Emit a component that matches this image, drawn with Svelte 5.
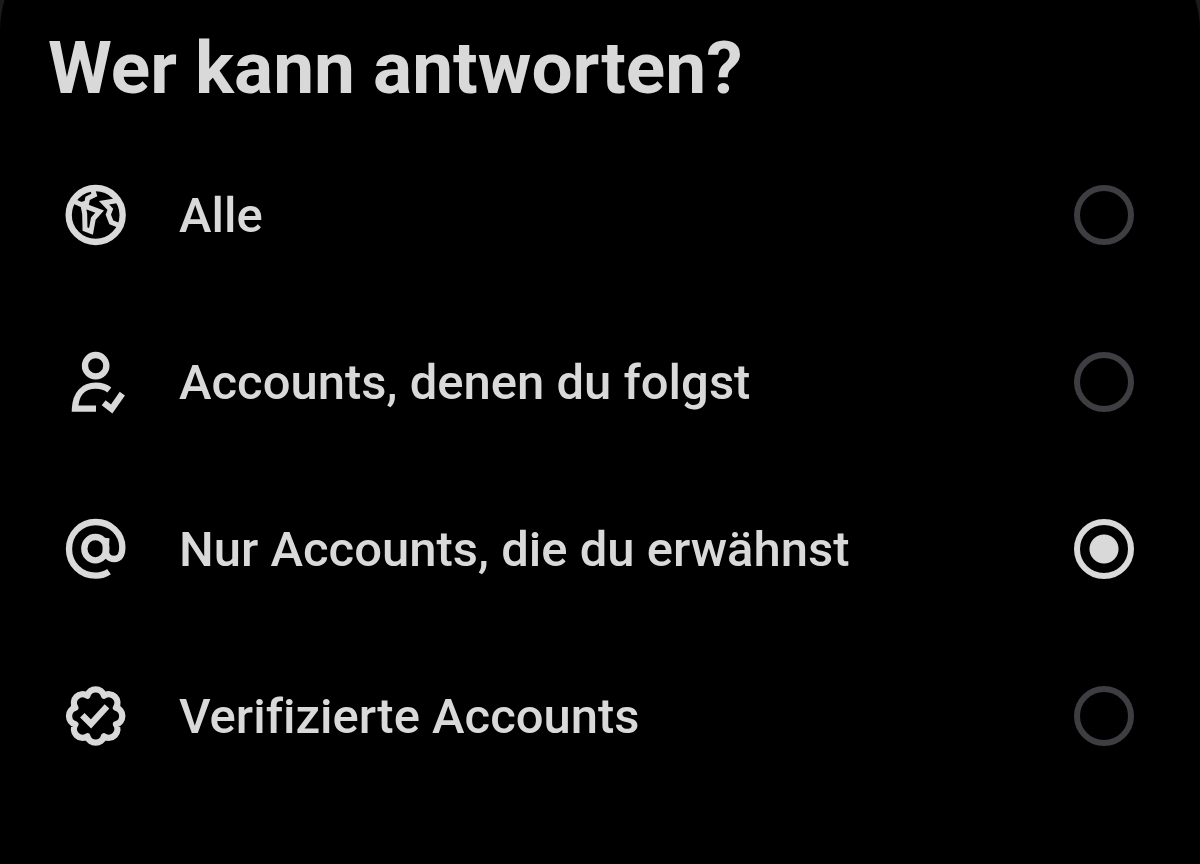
<script>
  let selected = $state('mentioned');

  const options = [
    { id: 'everyone', label: 'Alle' },
    { id: 'following', label: 'Accounts, denen du folgst' },
    { id: 'mentioned', label: 'Nur Accounts, die du erwähnst' },
    { id: 'verified', label: 'Verifizierte Accounts' }
  ];
</script>

<div class="backdrop">
  <main class="sheet">
    <fieldset>
      <legend>Wer kann antworten?</legend>
      {#each options as option (option.id)}
        <label class="row">
          <svg class="icon" viewBox="24 24 192 192" aria-hidden="true">
            {#if option.id === 'everyone'}
              <circle cx="119" cy="120" r="81" />
              <path class="fine" d="M51 77 L83 92 L131 110 L112 131 L105 169 L87 162 L86 116 L81 91" />
              <path class="fine" d="M110 43 L115 60 L95 70 L92 84 L77 88" />
              <path class="fine" d="M190 76 L144 83 L163 103 L157 119 L166 142 L186 150" />
            {:else if option.id === 'following'}
              <circle cx="119" cy="71" r="32" />
              <path d="M160 144 C149 135 136 131 119 131 C83 131 59 155 57 200 H120" />
              <path d="M143 182 L167 201 L199 155" />
            {:else if option.id === 'mentioned'}
              <path d="M159 188 C148 196 134 200 119 200 C74 200 39 165 39 120 C39 75 74 39 119 39 C164 39 199 73 199 115 C199 137 191 150 175 150 C158 150 148 139 149 121 L151 87" />
              <ellipse cx="118" cy="119" rx="33" ry="35" />
            {:else}
              <path stroke-linejoin="round" d="M94 59 A26 26 0 0 1 144 59 A26 26 0 0 1 180 95 A26 26 0 0 1 180 145 A26 26 0 0 1 144 181 A26 26 0 0 1 94 181 A26 26 0 0 1 58 145 A26 26 0 0 1 58 95 A26 26 0 0 1 94 59 Z" />
              <path d="M79 118 L105 144 L153 91" />
            {/if}
          </svg>
          <span class="text">{option.label}</span>
          <input type="radio" name="reply" value={option.id} bind:group={selected} />
        </label>
      {/each}
    </fieldset>
  </main>
</div>

<style>
  :global(body) {
    margin: 0;
    background: #000;
  }

  .backdrop {
    overflow: hidden;
    background: #1b1b1c;
  }

  .sheet {
    box-sizing: border-box;
    min-height: calc(100vh + 70px);
    margin-top: -70px;
    padding: 96px 48px 48px;
    border-radius: 100px 100px 0 0;
    background: #000;
    color: #d9d9d9;
    font-family: Roboto, sans-serif;
    font-variant-ligatures: none;
  }

  fieldset {
    margin: 0;
    padding: 0;
    border: 0;
    min-width: 0;
  }

  legend {
    padding: 0;
    font-size: 73px;
    font-weight: 700;
    line-height: 84px;
    margin-bottom: 21px;
  }

  .row {
    display: flex;
    align-items: center;
    min-height: 167px;
    padding: 0 16px;
    cursor: pointer;
  }

  .icon {
    flex: none;
    width: 64px;
    height: 64px;
    margin-right: 51px;
    fill: none;
    stroke: #d9d9d9;
    stroke-width: 19;
  }

  .fine {
    stroke-width: 15;
  }

  .text {
    flex: 1;
    padding-top: 2px;
    font-size: 49px;
    font-weight: 500;
    line-height: 60px;
  }

  input {
    appearance: none;
    flex: none;
    box-sizing: border-box;
    width: 60px;
    height: 60px;
    margin: 0 2px 0 24px;
    border: 6px solid #3e3d42;
    border-radius: 50%;
    cursor: pointer;
  }

  input:checked {
    border-color: #d9d9d9;
    background: radial-gradient(circle, #d9d9d9 14px, transparent 15px);
  }

  input:focus-visible {
    outline: 3px solid #1d9bf0;
    outline-offset: 4px;
  }
</style>
